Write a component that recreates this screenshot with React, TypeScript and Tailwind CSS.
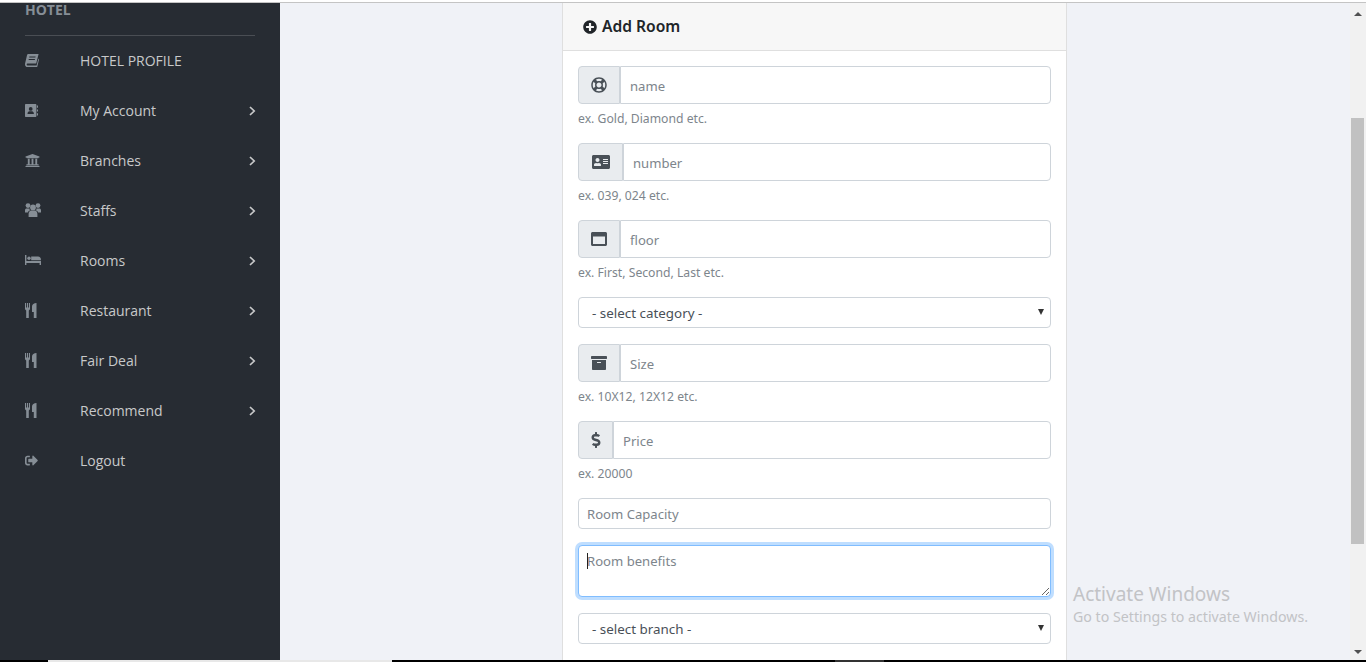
import React from "react";
import { FaPlusCircle, FaRegLifeRing, FaAddressCard, FaArchive, FaDollarSign, FaUniversity, FaSignOutAlt } from "react-icons/fa";

const BookIcon = () => (
  <svg width="14" height="13" viewBox="0 0 14 13" fill="currentColor">
    <path d="M3.2 0H13.6L11.2 9.6H3C2 9.6 1.7 10 1.7 10.6C1.7 11.2 2.2 11.6 3 11.6H11.6L13.4 4.6L14 5.4L12.2 13H2.6C1 13 0 11.8 0 10.4C0 9.9 .1 9.5 .2 9.1L2 1.2C2.2 .4 2.6 0 3.2 0Z" />
    <path d="M4.4 2.6H10.6L10.4 3.6H4.2ZM3.8 5H10L9.8 6H3.6Z" fill="#272c33" />
  </svg>
);
const CutleryIcon = () => (
  <svg width="12" height="15" viewBox="0 0 12 15" fill="currentColor">
    <path d="M0 0H1V4.5H1.9V0H3.1V4.5H4V0H5V6.2L3.8 7.4V15H1.2V7.4L0 6.2Z" />
    <path d="M7 9V3.5C7 1.2 9 0 11.5 0V15H8.8V9Z" />
  </svg>
);
const UsersIcon = () => (
  <svg width="16" height="14" viewBox="0 0 16 14" fill="currentColor">
    <circle cx="3" cy="2.6" r="2.4" />
    <circle cx="13" cy="2.6" r="2.4" />
    <circle cx="8" cy="4.4" r="2.9" />
    <path d="M3.6 14V11C3.6 9 5 7.6 6 7.6H10C11 7.6 12.4 9 12.4 11V14Z" />
    <path d="M0 9.6V7.2C0 6 .8 5.4 1.6 5.4H4.6C4.5 6.4 4.8 7 5.2 7.4C3.8 7.8 3 8.6 2.8 9.6Z" />
    <path d="M16 9.6V7.2C16 6 15.2 5.4 14.4 5.4H11.4C11.5 6.4 11.2 7 10.8 7.4C12.2 7.8 13 8.6 13.2 9.6Z" />
  </svg>
);
const BedIcon = () => (
  <svg width="16" height="10" viewBox="0 0 16 10" fill="currentColor">
    <path d="M0 0H1.4V6H16V10H14.6V8H1.4V10H0Z" />
    <circle cx="4" cy="3.2" r="1.7" />
    <path d="M6.2 1.6H13C14.8 1.6 16 3 16 5.2H6.2Z" />
  </svg>
);
const AddrIcon = () => (
  <svg width="13" height="13" viewBox="0 0 13 13" fill="currentColor">
    <path fillRule="evenodd" d="M1 0H10.4C11 0 11.4 .4 11.4 1V12C11.4 12.6 11 13 10.4 13H1C.4 13 0 12.6 0 12V1C0 .4 .4 0 1 0ZM5.7 3A1.9 1.9 0 1 0 5.7 6.8A1.9 1.9 0 1 0 5.7 3ZM2.5 10H8.9C8.9 8.2 8 7.2 7 7.2H4.4C3.4 7.2 2.5 8.2 2.5 10Z" />
    <path d="M11.9 1.6H13V3.8H11.9ZM11.9 5.4H13V7.6H11.9ZM11.9 9.2H13V11.4H11.9Z" />
  </svg>
);
const WindowIcon = () => (
  <svg width="16" height="14" viewBox="0 0 16 14" fill="currentColor">
    <path fillRule="evenodd" d="M1.5 0H14.5C15.3 0 16 .7 16 1.5V12.5C16 13.3 15.3 14 14.5 14H1.5C.7 14 0 13.3 0 12.5V1.5C0 .7 .7 0 1.5 0ZM2 4.4V12H14V4.4Z" />
  </svg>
);
const BankIcon = () => <FaUniversity size={15} />;
const OutIcon = () => <FaSignOutAlt size={13} />;

const nav = [
  { label: "HOTEL PROFILE", Icon: BookIcon, arrow: false },
  { label: "My Account", Icon: AddrIcon, arrow: true },
  { label: "Branches", Icon: BankIcon, arrow: true },
  { label: "Staffs", Icon: UsersIcon, arrow: true },
  { label: "Rooms", Icon: BedIcon, arrow: true },
  { label: "Restaurant", Icon: CutleryIcon, arrow: true },
  { label: "Fair Deal", Icon: CutleryIcon, arrow: true },
  { label: "Recommend", Icon: CutleryIcon, arrow: true },
  { label: "Logout", Icon: OutIcon, arrow: false },
];

function Group({ Icon, ph, hint, w, size = 16 }: { Icon: any; ph: string; hint: string; w: string; size?: number }) {
  return (
    <div>
      <div className="flex h-[38px]">
        <div className={`${w} shrink-0 flex items-center justify-center bg-[#e9ecef] border border-[#ced4da] rounded-l-[4px] text-[#495057]`}>
          <Icon size={size} />
        </div>
        <input readOnly placeholder={ph} className="flex-1 min-w-0 bg-white border border-[#ced4da] rounded-r-[4px] pl-[9px] pr-[9px] pt-[3px] text-[13.1px] outline-none placeholder:text-[#7d858c]" />
      </div>
      <div className="mt-[7px] mb-[16px] text-[12.2px] leading-[16px] text-[#7d858c]">{hint}</div>
    </div>
  );
}

function Sel({ label }: { label: string }) {
  return (
    <div className="relative h-[31px] bg-white border border-[#ced4da] rounded-[4px] flex items-center pl-[13px] pt-[2px] text-[13.4px] text-[#495057]">
      {label}
      <span className="absolute right-[6px] top-[11px] w-0 h-0 border-l-[3.5px] border-r-[3.5px] border-t-[6px] border-l-transparent border-r-transparent border-t-[#333]" />
    </div>
  );
}

export default function App() {
  return (
    <div className="relative h-[662px] w-[1366px] flex flex-col overflow-hidden bg-[#f0f2f7] font-['Noto_Sans',sans-serif]">
      <div className="h-[3px] shrink-0 bg-white border-b border-[#c4c4c4]" />
      <div className="flex flex-1 min-h-0">
        <aside className="w-[280px] shrink-0 bg-[#272c33] font-['Open_Sans',sans-serif] text-[14px] text-[#c8c9ca]">
          <div className="mx-[25px] h-[35px] border-b border-[#4a4e54] -mt-[2px] -mb-px">
            <div className="text-[14px] leading-[18px] font-bold text-[#868e96] uppercase">Hotel</div>
          </div>
          <ul>
            {nav.map(({ label, Icon, arrow }) => (
              <li key={label} className="h-[50px] flex items-center pl-[25px] pr-[24px]">
                <span className="w-[55px] flex items-center text-[#868e96]"><Icon /></span>
                <span className="flex-1">{label}</span>
                {arrow && (
                  <svg className="mt-[2px]" width="7" height="10" viewBox="0 0 7 10" fill="none" stroke="#c8c9ca" strokeWidth="1.7">
                    <path d="M1 1l4.2 4L1 9" />
                  </svg>
                )}
              </li>
            ))}
          </ul>
        </aside>
        <main className="flex-1 pl-[282px]">
          <div className="w-[505px] h-full bg-white border-x border-[#dfdfdf] flex flex-col">
            <div className="h-[48px] shrink-0 bg-[#f7f7f7] border-b border-[#dfdfdf] flex items-center px-[20px] gap-[5px] text-[15.6px] font-semibold text-[#212529]">
              <FaPlusCircle size={14} />
              Add Room
            </div>
            <div className="px-[15px] pt-[15px]">
              <Group Icon={FaRegLifeRing} ph="name" hint="ex. Gold, Diamond etc." w="w-[42px]" />
              <Group Icon={FaAddressCard} ph="number" hint="ex. 039, 024 etc." w="w-[45px]" size={18} />
              <Group Icon={WindowIcon} ph="floor" hint="ex. First, Second, Last etc." w="w-[42px]" />
              <Sel label="- select category -" />
              <div className="h-[16px]" />
              <Group Icon={FaArchive} ph="Size" hint="ex. 10X12, 12X12 etc." w="w-[42px]" />
              <Group Icon={FaDollarSign} ph="Price" hint="ex. 20000" w="w-[35px]" />
              <input readOnly placeholder="Room Capacity" className="block w-full h-[31px] bg-white border border-[#ced4da] rounded-[4px] px-[8px] text-[13.1px] outline-none placeholder:text-[#7d858c]" />
              <div className="relative mt-[16px]">
                <textarea readOnly placeholder="Room benefits" className="block w-full h-[52px] bg-white border border-[#80bdff] rounded-[4px] px-[8px] py-[6px] text-[13.1px] outline-none shadow-[0_0_0_3px_rgba(0,123,255,0.25)] placeholder:text-[#7d858c]" />
                <span className="absolute left-[9px] top-[8px] w-px h-[16px] bg-[#222]" />
              </div>
              <div className="h-[16px]" />
              <Sel label="- select branch -" />
            </div>
          </div>
        </main>
        <div className="w-[16px] shrink-0 bg-[#f1f1f1] flex flex-col items-center relative">
          <span className="mt-[9px] w-0 h-0 border-l-[4px] border-r-[4px] border-b-[4px] border-l-transparent border-r-transparent border-b-[#505050]" />
          <div className="absolute top-[115px] left-[1px] w-[13px] h-[426px] bg-[#c1c1c1]" />
          <span className="absolute bottom-[6px] w-0 h-0 border-l-[4px] border-r-[4px] border-t-[4px] border-l-transparent border-r-transparent border-t-[#505050]" />
        </div>
      </div>
      <div className="h-[2px] shrink-0 bg-black flex">
        <div className="ml-[48px] w-[344px] bg-[#e8e8e8]" />
        <div className="ml-[443px] w-[49px] bg-[#333]" />
      </div>
      <div className="absolute left-[1073px] top-[582px] text-[#c2c3c6]">
        <div className="text-[19px] leading-[24px]">Activate Windows</div>
        <div className="text-[14.2px] leading-[22px]">Go to Settings to activate Windows.</div>
      </div>
    </div>
  );
}
